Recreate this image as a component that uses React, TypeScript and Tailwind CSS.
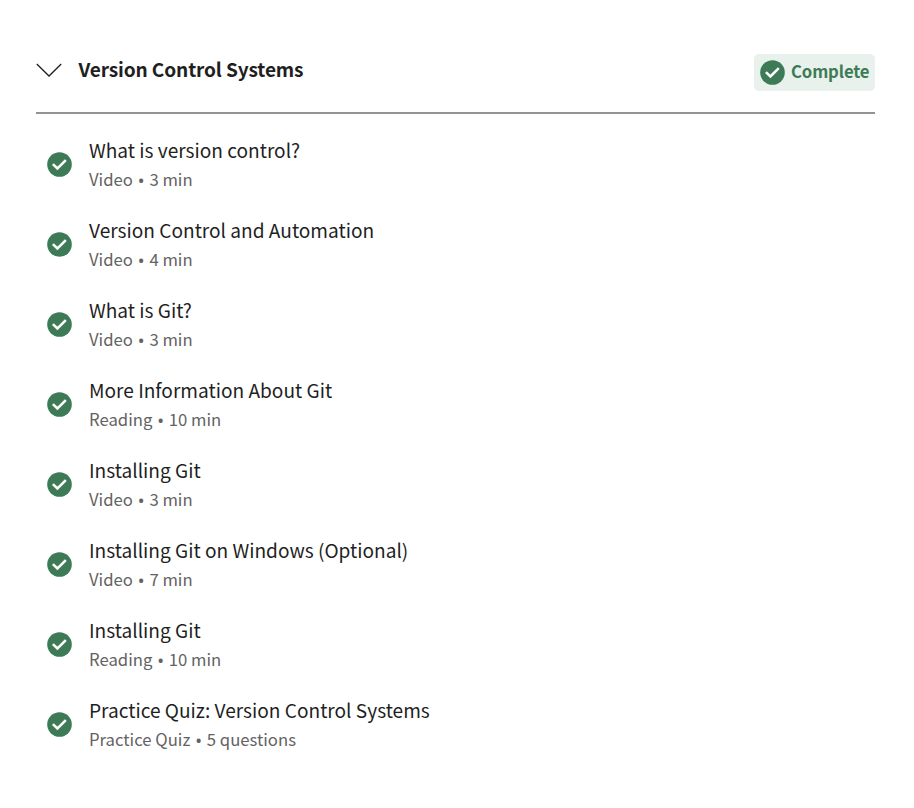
const items = [
  { title: "What is version control?", kind: "Video", length: "3 min" },
  { title: "Version Control and Automation", kind: "Video", length: "4 min" },
  { title: "What is Git?", kind: "Video", length: "3 min" },
  { title: "More Information About Git", kind: "Reading", length: "10 min" },
  { title: "Installing Git", kind: "Video", length: "3 min" },
  { title: "Installing Git on Windows (Optional)", kind: "Video", length: "7 min" },
  { title: "Installing Git", kind: "Reading", length: "10 min" },
  { title: "Practice Quiz: Version Control Systems", kind: "Practice Quiz", length: "5 questions" },
];

function CheckCircle({ className }: { className: string }) {
  return (
    <svg viewBox="0 0 25 25" className={className} aria-hidden="true">
      <circle cx="12.5" cy="12.5" r="12.3" fill="#3d7b57" />
      <path d="M5.9 12.1l4.5 4.3 8.4-8.3" fill="none" stroke="#fff" strokeWidth="2.6" />
    </svg>
  );
}

export default function App() {
  return (
    <main className="h-[808px] w-full bg-white pt-[54px] pr-[39px] pl-9 font-['Noto_Sans_CJK_SC',sans-serif] text-[#1f1f1f]">
      <header className="flex h-[60px] items-start justify-between border-b-2 border-[#929297]">
        <div className="flex items-start">
          <svg viewBox="0 0 26 14" className="mt-[9px] h-[14px] w-[26px]" fill="none" stroke="#1f1f1f" strokeWidth="1.3">
            <path d="M.8 1l12.2 12L25.2 1" />
          </svg>
          <h2 className="ml-[16.5px] text-[19.1px] leading-[30px] font-bold tracking-[-0.14px] whitespace-nowrap">
            Version Control Systems
          </h2>
        </div>
        <div className="flex h-[37px] w-[121px] items-center rounded-[5px] bg-[#e8f1ec] pl-1.5 text-[#3d7b57]">
          <CheckCircle className="size-[25px] shrink-0" />
          <span className="mb-[3px] ml-1.5 text-[16.7px] leading-6 font-bold tracking-[-0.12px]">Complete</span>
        </div>
      </header>
      <ul className="pt-[21px]">
        {items.map((item, i) => (
          <li key={i} className="flex h-20 items-start pl-[11px]">
            <CheckCircle className={i < 6 ? "mt-[17px] size-[25px]" : "mt-[16.5px] size-[25px]"} />
            <div className="ml-[17px] whitespace-nowrap">
              <h3 className="text-[19.1px] leading-[30px]">{item.title}</h3>
              <p className="flex text-[16.7px] leading-7 text-[#636363]">
                <span>{item.kind}</span>
                <span className="w-[16.5px] pt-px text-center font-['Noto_Sans',sans-serif] text-[18px]">•</span>
                <span>{item.length}</span>
              </p>
            </div>
          </li>
        ))}
      </ul>
    </main>
  );
}
